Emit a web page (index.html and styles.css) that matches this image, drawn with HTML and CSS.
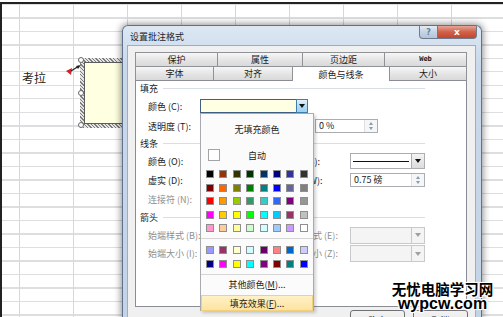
FILE: index.html
```html
<!DOCTYPE html>
<html lang="zh-CN">
<head>
  <meta charset="UTF-8" />
  <meta name="viewport" content="width=device-width, initial-scale=1.0" />
  <title>设置批注格式</title>
  <link rel="stylesheet" href="styles.css">
</head>
<body>

  <!-- Worksheet -->
  <div class="sheet">
    <div class="cell-text">考拉</div>
  </div>

  <!-- Comment box -->
  <div class="note">
    <div class="note-body"></div>
  </div>
  <span class="handle handle-top"></span>
  <span class="handle handle-mid"></span>
  <span class="handle handle-bottom"></span>
  <svg class="note-arrow" width="18" height="14" viewBox="0 0 18 14">
    <polygon points="1,8 7,5 6,12" fill="#d3232a" />
    <line x1="6" y1="8" x2="14" y2="3" stroke="#222" stroke-width="1.2" />
    <polygon points="16,2 11,3 13,6" fill="#222" />
  </svg>

  <!-- Dialog -->
  <div class="dialog">
    <div class="titlebar">
      <span class="title">设置批注格式</span>
      <div class="caption-btns">
        <span class="cap-help">?</span>
        <span class="cap-close">x</span>
      </div>
    </div>

    <div class="client">
      <div class="tabs tabs-back">
        <span class="tab">保护</span>
        <span class="tab">属性</span>
        <span class="tab">页边距</span>
        <span class="tab tab-web">Web</span>
      </div>
      <div class="tabs tabs-front">
        <span class="tab">字体</span>
        <span class="tab">对齐</span>
        <span class="tab selected">颜色与线条</span>
        <span class="tab">大小</span>
      </div>

      <div class="panel">
        <div class="group-head"><span>填充</span><i class="rule"></i></div>

        <div class="row">
          <span class="label">颜色 (C):</span>
          <div class="combo combo-fill">
            <span class="combo-field"></span>
            <span class="combo-btn"><i class="tri"></i></span>
          </div>
        </div>

        <div class="row">
          <span class="label">透明度 (T):</span>
          <div class="spin spin-alpha">
            <span class="spin-val">0 %</span>
            <span class="spin-btns"><i class="up"></i><i class="dn"></i></span>
          </div>
        </div>

        <div class="group-head"><span>线条</span><i class="rule"></i></div>

        <div class="row">
          <span class="label">颜色 (O):</span>
          <span class="label label-right">样式 (S):</span>
          <div class="combo combo-line">
            <span class="combo-field"><i class="line-sample"></i></span>
            <span class="combo-btn"><i class="tri"></i></span>
          </div>
        </div>

        <div class="row">
          <span class="label">虚实 (D):</span>
          <span class="label label-right">粗细 (W):</span>
          <div class="spin spin-weight">
            <span class="spin-val">0.75 磅</span>
            <span class="spin-btns"><i class="up"></i><i class="dn"></i></span>
          </div>
        </div>

        <div class="row">
          <span class="label disabled">连接符 (N):</span>
        </div>

        <div class="group-head"><span>箭头</span><i class="rule"></i></div>

        <div class="row">
          <span class="label disabled">始端样式 (B):</span>
          <span class="label label-right disabled">末端样式 (E):</span>
          <div class="combo combo-off">
            <span class="combo-field"></span>
            <span class="combo-btn"><i class="tri"></i></span>
          </div>
        </div>

        <div class="row">
          <span class="label disabled">始端大小 (I):</span>
          <span class="label label-right disabled">末端大小 (Z):</span>
          <div class="combo combo-off">
            <span class="combo-field"></span>
            <span class="combo-btn"><i class="tri"></i></span>
          </div>
        </div>
      </div>

      <div class="buttons">
        <span class="btn">确定</span>
        <span class="btn">取消</span>
      </div>
    </div>
  </div>

  <!-- Colour drop-down -->
  <div class="palette">
    <div class="p-none">无填充颜色</div>
    <div class="p-auto">
      <span class="auto-box"></span>
      <span class="auto-label">自动</span>
    </div>
    <div class="swatches">
      <span style="background:#000000"></span><span style="background:#993300"></span><span style="background:#333300"></span><span style="background:#003300"></span><span style="background:#003366"></span><span style="background:#000080"></span><span style="background:#333399"></span><span style="background:#333333"></span>
      <span style="background:#800000"></span><span style="background:#ff6600"></span><span style="background:#808000"></span><span style="background:#008000"></span><span style="background:#008080"></span><span style="background:#0000ff"></span><span style="background:#666699"></span><span style="background:#808080"></span>
      <span style="background:#ff0000"></span><span style="background:#ff9900"></span><span style="background:#99cc00"></span><span style="background:#339966"></span><span style="background:#33cccc"></span><span style="background:#3366ff"></span><span style="background:#800080"></span><span style="background:#969696"></span>
      <span style="background:#ff00ff"></span><span style="background:#ffcc00"></span><span style="background:#ffff00"></span><span style="background:#00ff00"></span><span style="background:#00ffff"></span><span style="background:#00ccff"></span><span style="background:#993366"></span><span style="background:#c0c0c0"></span>
      <span style="background:#ff99cc"></span><span style="background:#ffcc99"></span><span style="background:#ffff99"></span><span style="background:#ccffcc"></span><span style="background:#ccffff"></span><span style="background:#99ccff"></span><span style="background:#cc99ff"></span><span style="background:#ffffff"></span>
    </div>
    <div class="p-sep"></div>
    <div class="swatches swatches-extra">
      <span style="background:#9999ff"></span><span style="background:#993366"></span><span style="background:#ffffcc"></span><span style="background:#ccffff"></span><span style="background:#660066"></span><span style="background:#ff8080"></span><span style="background:#0066cc"></span><span style="background:#ccccff"></span>
      <span style="background:#000080"></span><span style="background:#ff00ff"></span><span style="background:#ffff00"></span><span style="background:#00ffff"></span><span style="background:#800080"></span><span style="background:#800000"></span><span style="background:#008080"></span><span style="background:#0000ff"></span>
    </div>
    <div class="p-sep p-sep-low"></div>
    <div class="p-item">其他颜色(<u>M</u>)...</div>
    <div class="p-item active">填充效果(<u>F</u>)...</div>
  </div>

  <!-- Watermark -->
  <div class="watermark">
    <div class="wm-cn">无忧电脑学习网</div>
    <div class="wm-en">wypcw.com</div>
  </div>

</body>
</html>
```

FILE: styles.css
```css
* {
  box-sizing: border-box;
  margin: 0;
  padding: 0;
}

body {
  position: relative;
  width: 503px;
  height: 317px;
  overflow: hidden;
  background: #fff;
  font-family: "Noto Sans CJK SC", "Liberation Sans", sans-serif;
  font-size: 9px;
  color: #1b1b1b;
}

/* --- Worksheet --- */
.sheet {
  height: 315px;
  margin-top: 2px;
  border-top: 2px solid #222;
  border-left: 2px solid #222;
  background:
    repeating-linear-gradient(to right, transparent 0 17px, #d6d8dc 17px 18px, transparent 18px 54px),
    repeating-linear-gradient(to bottom, #dcdee0 0 1px, transparent 1px 13.5px);
}

.cell-text {
  padding: 67px 0 0 20px;
  font-size: 12px;
  line-height: 14px;
  color: #222;
}

/* --- Comment box --- */
.note {
  position: absolute;
  left: 80px;
  top: 58px;
  width: 60px;
  height: 70px;
  padding: 4px;
  background: repeating-linear-gradient(45deg, #7d7d7d 0 1px, #e4e4e4 1px 2.5px);
}

.note-body {
  height: 100%;
  background: #ffffe1;
  border: 1px solid #5c5c5c;
}

.handle {
  position: absolute;
  left: 78px;
  width: 6px;
  height: 6px;
  border: 1px solid #666;
  border-radius: 50%;
  background: #fff;
}

.handle-top { top: 57px; }
.handle-mid { top: 90px; }
.handle-bottom { top: 122px; }

.note-arrow {
  position: absolute;
  left: 65px;
  top: 63px;
}

/* --- Dialog --- */
.dialog {
  position: absolute;
  left: 122px;
  top: 25px;
  width: 360px;
  height: 292px;
  overflow: hidden;
  border: 1px solid #5f7289;
  border-bottom: none;
  border-radius: 6px 6px 0 0;
  background: linear-gradient(#dde7f3, #c9d8ea 40px, #c4d4e7);
  box-shadow: 0 0 7px 1px rgba(0, 0, 0, 0.45);
}

.titlebar {
  display: flex;
  height: 19px;
  padding-left: 7px;
}

.title {
  line-height: 19px;
  padding-top: 1px;
  color: #1e1e1e;
}

.caption-btns {
  display: flex;
  margin-left: auto;
  margin-right: 4px;
  height: 13px;
}

.caption-btns span {
  display: flex;
  justify-content: center;
  align-items: center;
  border: 1px solid #6d7b8d;
  border-top: none;
  font-family: "DejaVu Sans", sans-serif;
  font-weight: bold;
}

.cap-help {
  width: 19px;
  border-radius: 0 0 0 4px;
  background: linear-gradient(#e4ebf4, #c5d3e4 50%, #b3c5db);
  color: #6a7e96;
  font-size: 8px;
}

.cap-close {
  width: 39px;
  border-left: none !important;
  border-radius: 0 0 4px 0;
  background: linear-gradient(#e6a596, #d0614a 50%, #c4452d);
  color: #fff;
  font-size: 9px;
}

.client {
  height: 280px;
  margin: 0 5px 0 4px;
  padding: 6px 8px 0 7px;
  border: 1px solid #9eaec2;
  background: #f0f0f0;
}

/* --- Tabs --- */
.tabs {
  display: grid;
  height: 14px;
}

.tabs-back { grid-template-columns: 82px 85px 82px 83px; }
.tabs-front { grid-template-columns: 78px 79px 98px 77px; }

.tab {
  display: flex;
  justify-content: center;
  align-items: center;
  height: 14px;
  border: 1px solid #8f9297;
  border-right: none;
  border-bottom: none;
  background: linear-gradient(#f6f6f6, #e3e3e3 60%, #d9d9d9);
  line-height: 1;
}

.tab:last-child {
  border-right: 1px solid #8f9297;
}

.tab-web {
  font-family: "DejaVu Sans Mono", monospace;
  font-weight: bold;
  font-size: 7px;
}

.tab.selected {
  position: relative;
  z-index: 1;
  height: 15px;
  background: #fff;
  border-right: 1px solid #8f9297;
}

.tab.selected + .tab {
  border-left: none;
}

/* --- Panel --- */
.panel {
  display: grid;
  grid-template-rows: 14px 22px 18px 16px 20px 18px 20px 16px 20px 16px;
  height: 227px;
  border: 1px solid #8a8d95;
  background: #fff;
}

.group-head {
  display: flex;
  align-items: center;
  padding: 0 41px 0 4px;
}

.group-head .rule {
  flex: 1;
  height: 1px;
  margin-left: 5px;
  background: #d5dfe5;
}

.row {
  display: grid;
  grid-template-columns: 64px 86px 64px 75px;
  align-items: center;
}

.label {
  padding-left: 12px;
  white-space: nowrap;
}

.label-right {
  grid-column: 3;
  padding-left: 0;
}

.disabled {
  color: #8e8e8e;
}

/* --- Combo boxes --- */
.combo {
  display: flex;
  height: 15px;
}

.combo-field {
  flex: 1;
  display: flex;
  align-items: center;
  border: 1px solid #abadb3;
  border-right: none;
  background: #fff;
  padding: 0 2px;
}

.combo-btn {
  display: flex;
  justify-content: center;
  align-items: center;
  width: 14px;
  border: 1px solid #abadb3;
  background: linear-gradient(#f3f3f3, #dcdcdc);
}

.tri {
  width: 0;
  height: 0;
  border-left: 3px solid transparent;
  border-right: 3px solid transparent;
  border-top: 4px solid #111;
}

.combo-fill {
  grid-column: 2 / 4;
  width: 108px;
  height: 14px;
}

.combo-fill .combo-field {
  background: #ffffe3;
  border-color: #3f5f84;
}

.combo-fill .combo-btn {
  width: 12px;
  border-color: #3c7fb1;
  background: linear-gradient(#e3f2fd, #b6dcf7 50%, #9fd0f4);
}

.combo-line {
  grid-column: 4;
  height: 16px;
}

.line-sample {
  flex: 1;
  height: 1px;
  background: #111;
}

.combo-off {
  grid-column: 4;
  height: 17px;
}

.combo-off .combo-field {
  background: #f4f4f4;
  border-color: #c7c9cc;
}

.combo-off .combo-btn {
  background: #f4f4f4;
  border-color: #c7c9cc;
}

.combo-off .tri {
  border-top-color: #a0a0a0;
}

/* --- Spin boxes --- */
.spin {
  display: flex;
  height: 14px;
  border: 1px solid #abadb3;
  background: #fff;
}

.spin-alpha {
  grid-column: 3 / 5;
  width: 63px;
  margin-left: 29px;
}

.spin-weight {
  grid-column: 4;
}

.spin-val {
  flex: 1;
  padding-left: 3px;
  line-height: 12px;
  color: #222;
}

.spin-btns {
  display: flex;
  flex-direction: column;
  justify-content: center;
  align-items: center;
  gap: 2px;
  width: 13px;
  border-left: 1px solid #dcdfe3;
  background: #f4f6f8;
}

.spin-btns i {
  width: 0;
  height: 0;
  border-left: 2.5px solid transparent;
  border-right: 2.5px solid transparent;
}

.spin-btns .up { border-bottom: 3px solid #8c9aab; }
.spin-btns .dn { border-top: 3px solid #8c9aab; }

/* --- Dialog buttons --- */
.buttons {
  display: flex;
  justify-content: flex-end;
  gap: 8px;
  margin: 3px -1px 0 0;
}

.btn {
  width: 55px;
  height: 21px;
  border: 1px solid #707070;
  border-radius: 3px;
  background: linear-gradient(#f2f2f2, #ebebeb 50%, #dddddd 50%, #cfcfcf);
  text-align: center;
  line-height: 19px;
}

/* --- Colour palette --- */
.palette {
  position: absolute;
  left: 200px;
  top: 113px;
  width: 114px;
  height: 198px;
  border: 1px solid #a7abb0;
  background: #fbfbfb;
  box-shadow: 2px 2px 3px rgba(0, 0, 0, 0.18);
}

.p-none {
  height: 32px;
  line-height: 32px;
  text-align: center;
}

.p-auto {
  display: grid;
  align-items: center;
  height: 18px;
  padding-left: 7px;
}

.auto-box,
.auto-label {
  grid-area: 1 / 1;
}

.auto-box {
  width: 12px;
  height: 12px;
  border: 1px solid #a4a4a4;
  background: #fff;
}

.auto-label {
  justify-self: center;
  margin-left: -7px;
}

.swatches {
  display: grid;
  grid-template-columns: repeat(8, 8px);
  grid-auto-rows: 8px;
  column-gap: 5.4px;
  row-gap: 5.5px;
  margin-top: 6px;
  padding-left: 5px;
}

.swatches span {
  border: 1px solid #8f8f8f;
}

.swatches-extra {
  margin-top: 7px;
}

.p-sep {
  height: 1px;
  margin-top: 6px;
  background: #d6d6d6;
}

.p-sep-low {
  margin-top: 6px;
}

.p-item {
  height: 19px;
  line-height: 19px;
  text-align: center;
}

.p-item.active {
  height: 16px;
  margin-top: 1px;
  line-height: 15px;
  border: 1px solid #f1d17c;
  background: linear-gradient(#fff1c6, #fde3a0);
}

/* --- Watermark --- */
.watermark {
  position: absolute;
  left: 390px;
  top: 279px;
  width: 105px;
  text-align: center;
  color: #000;
  font-weight: bold;
  text-shadow: 1px 1px 0 #fff, -1px -1px 0 #fff, 1px -1px 0 #fff, -1px 1px 0 #fff, 0 0 3px #fff;
}

.wm-cn {
  font-size: 14.5px;
  line-height: 19px;
}

.wm-en {
  font-family: "Liberation Sans", Arial, sans-serif;
  font-size: 16px;
  line-height: 11px;
}
```
